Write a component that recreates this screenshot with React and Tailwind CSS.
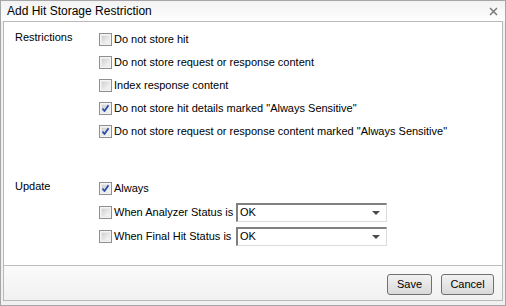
import React from 'react';

const font = { fontFamily: 'Tahoma, "Liberation Sans", Arial, sans-serif' };

const Checkbox = ({ checked }) => (
  <div className="w-[13px] h-[13px] shrink-0 border border-[#8f8f8f] bg-[#f4f4f4] p-[1px]">
    <div className="relative w-full h-full border border-[#eaeaea] bg-gradient-to-br from-[#cfcfcf] to-[#f8f8f8]">
      {checked && (
        <svg className="absolute -left-[1px] -top-[1px]" width="9" height="9" viewBox="0 0 9 9">
          <path d="M1.5 4.5 L3.5 7 L7.5 1.2" fill="none" stroke="#2c4ea8" strokeWidth="1.8" strokeLinejoin="round" />
        </svg>
      )}
    </div>
  </div>
);

const Option = ({ label, checked, className = 'h-[23px]', labelWidth = '', children }) => (
  <div className={`flex items-center ${className}`}>
    <Checkbox checked={checked} />
    <span className={`ml-[2px] text-[11px] text-black whitespace-nowrap ${labelWidth}`}>{label}</span>
    {children}
  </div>
);

const Select = ({ value }) => (
  <div className="w-[151px] h-[19px] flex items-center justify-between bg-white border-t-2 border-l-2 border-[#808080] border-r border-b border-r-[#dcdcdc] border-b-[#dcdcdc] pl-[2px] pr-[6px]">
    <span className="text-[11px] text-black">{value}</span>
    <svg width="8" height="4" viewBox="0 0 8 4">
      <path d="M0 0 L8 0 L4 4 Z" fill="#4a4a4a" />
    </svg>
  </div>
);

const Button = ({ children, className = '' }) => (
  <button className={`h-[21px] rounded-[3px] border border-[#707070] bg-gradient-to-b from-[#f2f2f2] to-[#d9d9d9] text-[11px] text-black ${className}`}>
    {children}
  </button>
);

const App = () => {
  return (
    <div style={font} className="w-[506px] h-[306px] bg-[#f0f0f0] border border-[#a6a6a6] flex flex-col">
      <div className="h-[20px] shrink-0 flex items-center justify-between pl-[6px] pr-[6px] bg-gradient-to-b from-[#f2f2f2] to-white">
        <span className="text-[12px] text-black">Add Hit Storage Restriction</span>
        <svg width="9" height="9" viewBox="0 0 9 9" className="mr-[1px]">
          <path d="M1 1 L8 8 M8 1 L1 8" stroke="#7a7a7a" strokeWidth="1.5" />
        </svg>
      </div>
      <div className="flex-1 mx-[2px] mb-[4px] border border-[#b9b9b9] flex flex-col">
        <div className="flex-1 bg-white pt-[6px] pl-[11px]">
          <div className="flex">
            <div className="w-[84px] h-[23px] pb-[5px] flex items-center text-[11px] text-black">Restrictions</div>
            <div className="flex flex-col">
              <Option label="Do not store hit" />
              <Option label="Do not store request or response content" />
              <Option label="Index response content" />
              <Option label={'Do not store hit details marked "Always Sensitive"'} checked />
              <Option label={'Do not store request or response content marked "Always Sensitive"'} checked />
            </div>
          </div>
          <div className="flex mt-[34px]">
            <div className="w-[84px] h-[23px] pb-[5px] flex items-center text-[11px] text-black">Update</div>
            <div className="flex flex-col">
              <Option label="Always" checked />
              <Option label="When Analyzer Status is" className="h-[24px]" labelWidth="w-[122px]">
                <Select value="OK" />
              </Option>
              <Option label="When Final Hit Status is" className="h-[24px]" labelWidth="w-[122px]">
                <Select value="OK" />
              </Option>
            </div>
          </div>
        </div>
        <div className="h-[35px] shrink-0 border-t border-[#bdbdbd] bg-gradient-to-b from-[#fbfbfb] to-[#f1f1f1] flex items-center justify-end gap-[9px] pr-[8px] pt-[2px]">
          <Button className="w-[45px]">Save</Button>
          <Button className="w-[53px]">Cancel</Button>
        </div>
      </div>
    </div>
  );
};

export default App;
